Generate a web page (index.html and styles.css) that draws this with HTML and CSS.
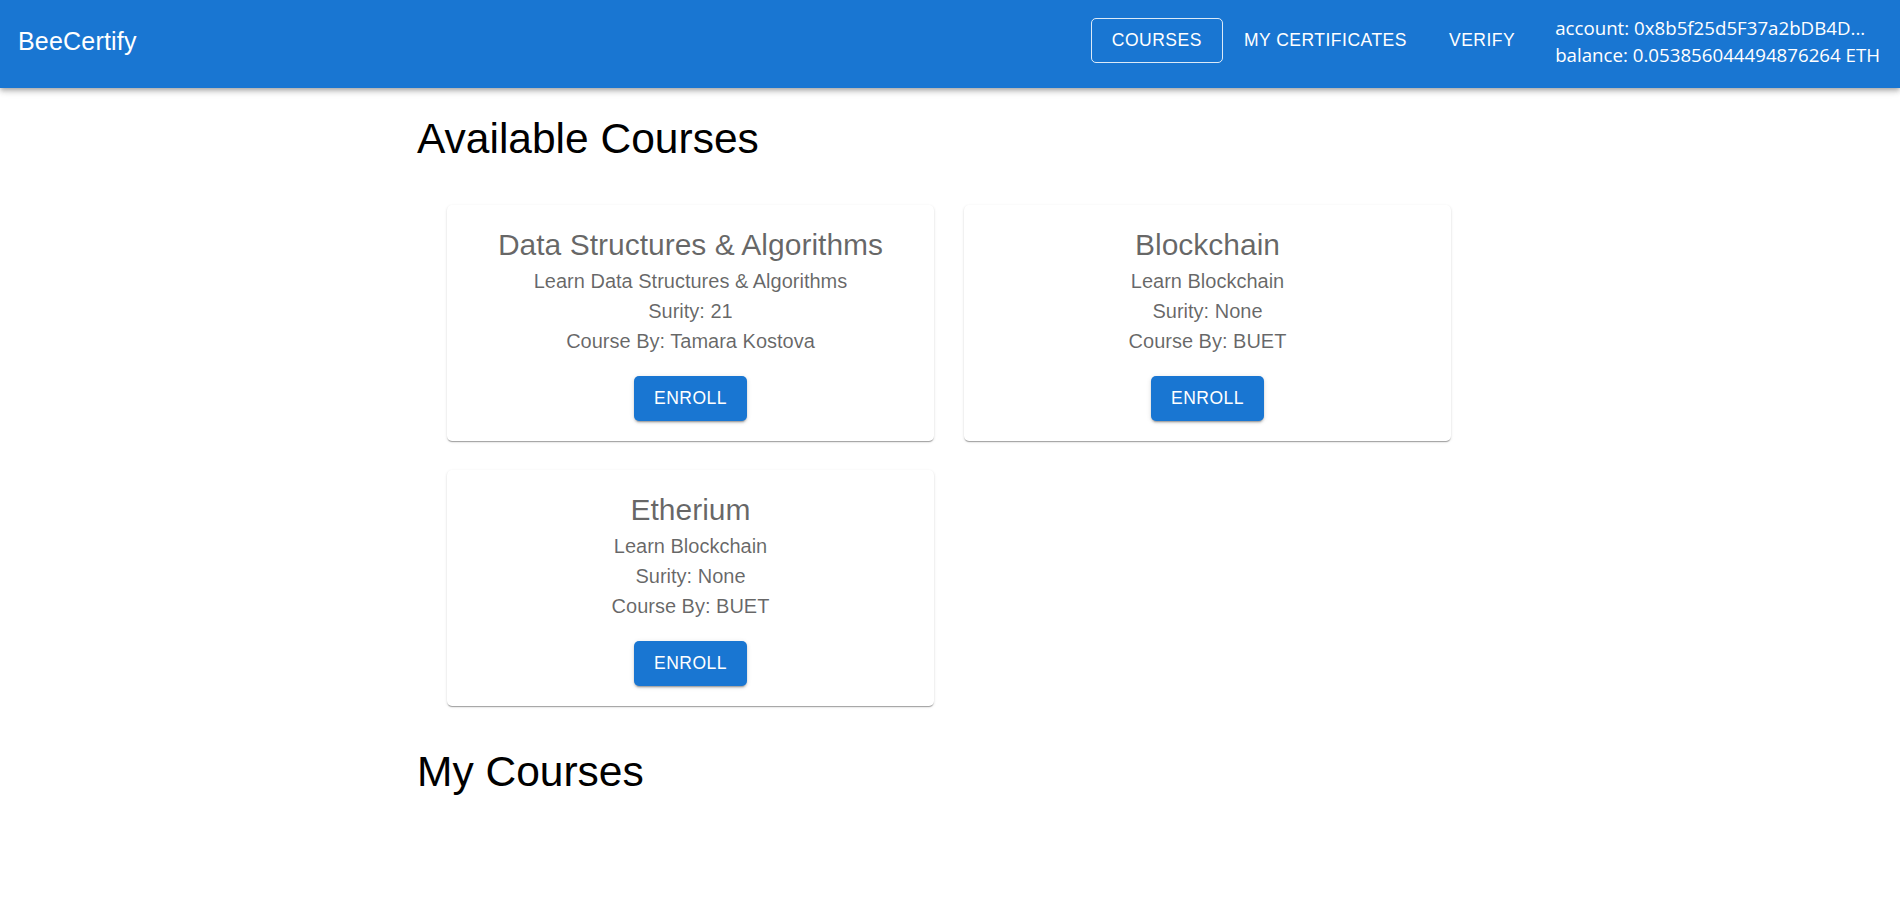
FILE: index.html
```html
<!DOCTYPE html>
<html lang="en">
<head>
<meta charset="utf-8">
<title>BeeCertify</title>
<link rel="stylesheet" href="styles.css">
</head>
<body>
<header class="appbar">
  <div class="brand">BeeCertify</div>
  <div class="spacer"></div>
  <nav class="nav">
    <a class="nav-btn active">Courses</a>
    <a class="nav-btn">My Certificates</a>
    <a class="nav-btn">Verify</a>
  </nav>
  <div class="account">
    <div class="account-line">account: 0x8b5f25d5F37a2bDB4D...</div>
    <div class="account-line">balance: 0.053856044494876264 ETH</div>
  </div>
</header>
<main class="container">
  <h2 class="section-title first">Available Courses</h2>
  <div class="course-grid">
    <div class="card">
      <div class="card-title">Data Structures &amp; Algorithms</div>
      <div class="card-line">Learn Data Structures &amp; Algorithms</div>
      <div class="card-line">Surity: 21</div>
      <div class="card-line">Course By: Tamara Kostova</div>
      <button class="btn-contained">Enroll</button>
    </div>
    <div class="card">
      <div class="card-title">Blockchain</div>
      <div class="card-line">Learn Blockchain</div>
      <div class="card-line">Surity: None</div>
      <div class="card-line">Course By: BUET</div>
      <button class="btn-contained">Enroll</button>
    </div>
    <div class="card">
      <div class="card-title">Etherium</div>
      <div class="card-line">Learn Blockchain</div>
      <div class="card-line">Surity: None</div>
      <div class="card-line">Course By: BUET</div>
      <button class="btn-contained">Enroll</button>
    </div>
  </div>
  <h2 class="section-title">My Courses</h2>
</main>
</body>
</html>
```
FILE: styles.css
```css
* {
  box-sizing: border-box;
}

html, body {
  margin: 0;
  padding: 0;
  background: #ffffff;
  font-family: "Liberation Sans", Arial, sans-serif;
}

.appbar {
  height: 88px;
  background: #1976d2;
  color: #ffffff;
  display: flex;
  align-items: center;
  padding: 0 20px 7px 18px;
  box-shadow: 0px 2px 4px -1px rgba(0,0,0,0.2), 0px 4px 5px 0px rgba(0,0,0,0.14), 0px 1px 10px 0px rgba(0,0,0,0.12);
  position: relative;
  z-index: 2;
}

.brand {
  font-size: 25px;
  font-weight: 500;
  line-height: 40px;
  letter-spacing: 0.2px;
}

.spacer {
  flex: 1;
}

.nav {
  display: flex;
  align-items: center;
}

.nav-btn {
  display: inline-flex;
  align-items: center;
  justify-content: center;
  height: 45px;
  padding: 0 20px;
  border: 1px solid transparent;
  border-radius: 5px;
  font-size: 17.5px;
  font-weight: 500;
  letter-spacing: 0.5px;
  text-transform: uppercase;
  color: #ffffff;
  cursor: pointer;
}

.nav-btn.active {
  border-color: rgba(255,255,255,0.85);
}

.account {
  margin-left: 19px;
  font-family: "Open Sans", "Noto Sans", sans-serif;
  font-size: 18.7px;
  line-height: 27px;
  white-space: nowrap;
}

.container {
  width: 1066px;
  margin: 0 auto;
}

.section-title {
  margin: 0;
  font-size: 42.5px;
  font-weight: 400;
  line-height: 52.5px;
  color: #000000;
}

.section-title.first {
  margin-top: 25px;
}

.course-grid {
  display: grid;
  grid-template-columns: repeat(2, 487px);
  column-gap: 30px;
  row-gap: 29px;
  padding: 39px 30px 40px 30px;
}

.card {
  background: #ffffff;
  border-radius: 5px;
  box-shadow: 0px 2px 1px -1px rgba(0,0,0,0.2), 0px 1px 1px 0px rgba(0,0,0,0.14), 0px 1px 3px 0px rgba(0,0,0,0.12);
  padding: 20px;
  display: flex;
  flex-direction: column;
  align-items: center;
  text-align: center;
  color: rgba(0,0,0,0.6);
}

.card-title {
  font-size: 30px;
  line-height: 40px;
  margin-bottom: 1px;
}

.card-line {
  font-size: 20px;
  line-height: 30px;
}

.btn-contained {
  margin-top: 20px;
  height: 45px;
  padding: 0 20px;
  border: none;
  border-radius: 5px;
  background: #1976d2;
  color: #ffffff;
  font-family: "Liberation Sans", Arial, sans-serif;
  font-size: 17.5px;
  font-weight: 500;
  letter-spacing: 0.5px;
  text-transform: uppercase;
  box-shadow: 0px 3px 1px -2px rgba(0,0,0,0.2), 0px 2px 2px 0px rgba(0,0,0,0.14), 0px 1px 5px 0px rgba(0,0,0,0.12);
  cursor: pointer;
}
```
